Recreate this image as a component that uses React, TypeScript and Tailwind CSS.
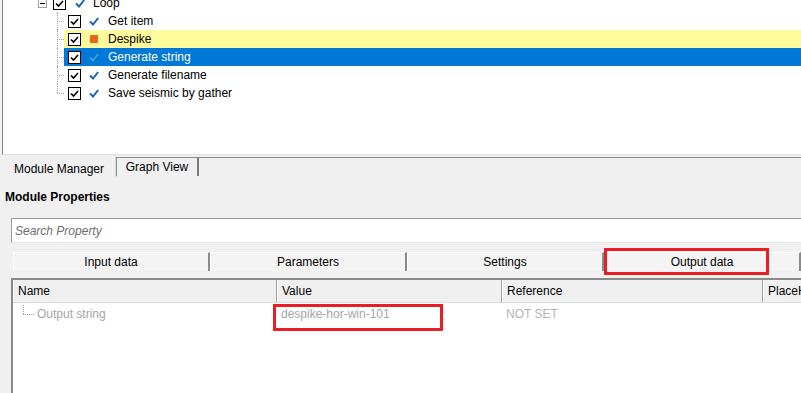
import React from "react";

const BlueCheck = ({ light }: { light?: boolean }) => (
  <svg width="10" height="9" viewBox="0 0 10 9" className="shrink-0">
    <path d="M1 4.5 L4 7.5 L9.2 1" fill="none" stroke={light ? "#4b95dd" : "#1c63b4"} strokeWidth="2" />
  </svg>
);

const CheckBox = () => (
  <div className="w-[13px] h-[13px] shrink-0 border border-black bg-white flex items-center justify-center">
    <svg width="11" height="11" viewBox="0 0 11 11">
      <path d="M2 5.5 L4.5 8 L9 3" fill="none" stroke="#000" strokeWidth="1.6" />
    </svg>
  </div>
);

type Child = { label: string; state?: "warn" | "selected" };

const children: Child[] = [
  { label: "Get item" },
  { label: "Despike", state: "warn" },
  { label: "Generate string", state: "selected" },
  { label: "Generate filename" },
  { label: "Save seismic by gather" },
];

function TreeRow({ item, last }: { item: Child; last: boolean }) {
  const bg =
    item.state === "warn" ? "bg-[#fdfb9b]" : item.state === "selected" ? "bg-[#0078d7] text-white" : "";
  return (
    <div className="flex h-[18px]">
      <div className="w-[54px] shrink-0" />
      {/* tree connector */}
      <div className="w-[7px] shrink-0 relative">
        <div
          className={`absolute left-0 top-0 border-l border-dotted border-[#a0a0a0] ${last ? "h-[9px]" : "h-[18px]"}`}
        />
        <div className="absolute left-0 top-[9px] w-[7px] border-t border-dotted border-[#a0a0a0]" />
      </div>
      <div className={`flex-1 flex items-center pl-[4px] ${bg}`}>
        <CheckBox />
        <div className="w-[8px]" />
        {item.state === "warn" ? (
          <div className="w-[10px] flex justify-start pl-[1px]">
            <div className="w-[8px] h-[8px] bg-[#e9651c]" />
          </div>
        ) : (
          <BlueCheck light={item.state === "selected"} />
        )}
        <span className="ml-[9px] leading-[18px]">{item.label}</span>
      </div>
    </div>
  );
}

export default function App() {
  return (
    <div className="w-[801px] h-[393px] overflow-hidden bg-[#f0f0f0] text-[12px] text-black font-['Liberation_Sans',Arial,sans-serif] flex flex-col">
      {/* Tree panel */}
      <div className="ml-[2px] h-[155px] shrink-0 bg-white border-l border-[#828282] border-b border-b-[#e3e3e3] overflow-hidden">
        <div className="-mt-[6px]">
          <div className="flex items-center h-[18px]">
            <div className="w-[35px] shrink-0" />
            <div className="w-[9px] h-[9px] border border-[#a0a0a0] flex items-center justify-center">
              <div className="w-[5px] h-px bg-black" />
            </div>
            <div className="w-[6px]" />
            <CheckBox />
            <div className="w-[9px]" />
            <BlueCheck />
            <span className="ml-[8px]">Loop</span>
          </div>
          {children.map((c, i) => (
            <TreeRow key={c.label} item={c} last={i === children.length - 1} />
          ))}
        </div>
      </div>

      {/* Bottom tabs */}
      <div className="flex h-[22px] shrink-0">
        <div className="ml-[3px] w-[113px] flex items-start justify-center pt-[5px] border-r border-r-[#d8d8d8]">
          Module Manager
        </div>
        <div className="w-[83px] h-[19px] mt-[2px] bg-[#f0f0f0] border-t border-l border-r-2 border-[#8e8e8e] border-r-[#7a7a7a] flex items-center justify-center">
          Graph View
        </div>
        <div className="flex-1 mt-[2px] border-t border-[#8e8e8e]" />
      </div>

      {/* Module Properties */}
      <div className="h-[41px] shrink-0 pt-[13px] pl-[5px] leading-[14px] font-bold">Module Properties</div>

      {/* Search */}
      <div className="ml-[11px] w-[800px] h-[25px] shrink-0 bg-white border-t border-l border-[#9a9a9a] border-b border-b-[#e6e6e6] flex items-center pl-[3px] italic text-[#6d6d6d]">
        Search Property
      </div>

      {/* Section buttons */}
      <div className="ml-[13px] mt-[9px] h-[19px] shrink-0 flex">
        {["Input data", "Parameters", "Settings", "Output data"].map((t) => (
          <div
            key={t}
            className="relative w-[197px] shrink-0 bg-[#f4f4f4] border-t border-t-white border-l border-l-white border-r-2 border-r-[#8a8a8a] flex items-center justify-center"
          >
            {t}
            {t === "Output data" && (
              <div className="absolute -left-[1px] -top-[5px] w-[165px] h-[27px] border-[3px] border-[#ea1c24]" />
            )}
          </div>
        ))}
      </div>

      {/* Table */}
      <div className="ml-[11px] mt-[7px] flex-1 bg-white border-l-2 border-t-2 border-[#8a8a8a] flex flex-col">
        <div className="flex h-[23px] shrink-0 bg-[#f0f0f0] border-b border-[#dcdcdc]">
          {[
            { t: "Name", w: "w-[264px]" },
            { t: "Value", w: "w-[225px]" },
            { t: "Reference", w: "w-[261px]" },
            { t: "PlaceHolder", w: "w-[100px]" },
          ].map((c) => (
            <div
              key={c.t}
              className={`${c.w} shrink-0 flex items-center pl-[4px] border-l border-l-white border-r border-r-[#a0a0a0] whitespace-nowrap overflow-hidden`}
            >
              {c.t}
            </div>
          ))}
        </div>
        <div className="flex h-[22px] text-[#a6a6a6]">
          <div className="w-[264px] shrink-0 flex items-center">
            <div className="w-[10px]" />
            <div className="relative w-[14px] h-[22px]">
              <div className="absolute left-0 top-[2px] h-[9px] border-l border-dotted border-[#a0a0a0]" />
              <div className="absolute left-0 top-[11px] w-[11px] border-t border-dotted border-[#a0a0a0]" />
            </div>
            <span>Output string</span>
          </div>
          <div className="relative w-[225px] shrink-0 flex items-center pl-[4px]">
            despike-hor-win-101
            <div className="absolute -left-[4px] top-[1px] w-[170px] h-[27px] border-[3px] border-[#ea1c24]" />
          </div>
          <div className="w-[261px] shrink-0 flex items-center pl-[4px] text-[#b4b4b4]">NOT SET</div>
        </div>
      </div>
    </div>
  );
}
